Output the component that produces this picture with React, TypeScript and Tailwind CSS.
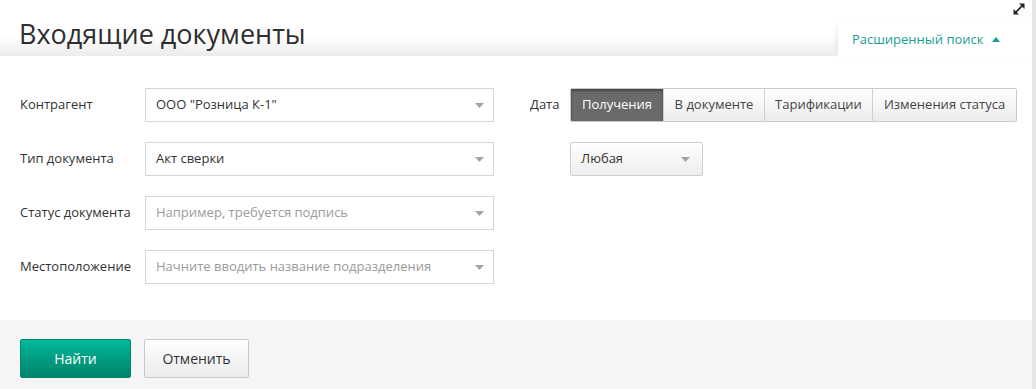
import React from "react";

const font = { fontFamily: '"Open Sans", "Noto Sans", sans-serif' };

function Caret({ className = "" }: { className?: string }) {
  return (
    <svg width="9" height="5" viewBox="0 0 9 5" className={className}>
      <path d="M0 0 H9 L4.5 5 Z" fill="#a3a3a3" />
    </svg>
  );
}

function Field({ label, value, placeholder }: { label: string; value?: string; placeholder?: string }) {
  return (
    <div className="flex items-center h-[34px]">
      <div className="w-[125px] shrink-0 text-[13px] text-[#333]">{label}</div>
      <div className="w-[349px] h-[34px] border border-[#d6d6d6] bg-white flex items-center pl-[10px] pr-[9px]">
        <span className={`flex-1 text-[13px] ${value ? "text-[#333]" : "text-[#9a9a9a]"}`}>{value ?? placeholder}</span>
        <Caret />
      </div>
    </div>
  );
}

const tabs = [
  { t: "Получения", w: "w-[92px]" },
  { t: "В документе", w: "w-[101px]" },
  { t: "Тарификации", w: "w-[108px]" },
  { t: "Изменения статуса", w: "w-[144px]" },
];

export default function App() {
  return (
    <div className="w-[1036px] h-[389px] flex bg-white overflow-hidden" style={font}>
      <div className="w-[1032px] flex flex-col">
        {/* header */}
        <div className="relative h-[56px] flex items-end justify-between bg-gradient-to-b from-white from-65% to-[#ebebeb]">
          <h1 className="pl-[19px] pb-[9px] text-[27px] leading-none text-[#2e2e2e] font-medium">Входящие документы</h1>
          <div className="w-[194px] h-[33px] bg-white flex items-center pl-[14px] gap-[8px] shadow-[-4px_0_6px_-4px_rgba(0,0,0,0.12)]">
            <span className="text-[13px] text-[#1a9e94]">Расширенный поиск</span>
            <svg width="8" height="5" viewBox="0 0 8 5">
              <path d="M0 5 L4 0 L8 5 Z" fill="#1a9e94" />
            </svg>
          </div>
          <svg className="absolute right-[7px] top-[3px]" width="12" height="12" viewBox="0 0 12 12">
            <path d="M2 10 L10 2" stroke="#222" strokeWidth="1.7" />
            <path d="M6 0.5 H11.5 V6 Z" fill="#222" />
            <path d="M0.5 6 V11.5 H6 Z" fill="#222" />
          </svg>
        </div>

        {/* form */}
        <div className="flex-1 flex pt-[32px] pl-[20px]">
          <div className="flex flex-col gap-[20px]">
            <Field label="Контрагент" value={'ООО "Розница К-1"'} />
            <Field label="Тип документа" value="Акт сверки" />
            <Field label="Статус документа" placeholder="Например, требуется подпись" />
            <Field label="Местоположение" placeholder="Начните вводить название подразделения" />
          </div>
          <div className="ml-[36px] flex flex-col gap-[20px]">
            <div className="flex items-center h-[34px]">
              <span className="w-[40px] text-[13px] text-[#333]">Дата</span>
              <div className="flex h-[34px] rounded-[2px] border border-[#c9c9c9] overflow-hidden">
                {tabs.map(({ t, w }, i) =>
                  i === 0 ? (
                    <div
                      key={t}
                      className={`${w} flex items-center justify-center text-[13px] text-white bg-[#6a6a6a] shadow-[inset_0_2px_3px_rgba(0,0,0,0.35)]`}
                    >
                      {t}
                    </div>
                  ) : (
                    <div
                      key={t}
                      className={`${w} flex items-center justify-center text-[13px] text-[#444] border-l border-[#cfcfcf] bg-gradient-to-b from-white to-[#ececec]`}
                    >
                      {t}
                    </div>
                  )
                )}
              </div>
            </div>
            <div className="pl-[40px]">
              <div className="w-[133px] h-[34px] border border-[#cfcfcf] rounded-[2px] bg-gradient-to-b from-white to-[#ededed] flex items-center pl-[10px] pr-[12px]">
                <span className="flex-1 text-[13px] text-[#333]">Любая</span>
                <Caret />
              </div>
            </div>
          </div>
        </div>

        {/* footer */}
        <div className="h-[69px] bg-[#f5f5f5] flex items-start pt-[19px] pl-[20px] gap-[13px]">
          <button className="w-[111px] h-[39px] rounded-[2px] border border-[#00866d] bg-gradient-to-b from-[#00b898] to-[#00846b] text-white text-[14px]">
            Найти
          </button>
          <button className="w-[105px] h-[39px] rounded-[2px] border border-[#c9c9c9] bg-gradient-to-b from-white to-[#ebebeb] text-[#333] text-[14px]">
            Отменить
          </button>
        </div>
      </div>
      <div className="w-[4px] bg-[#e6e6e6]" />
    </div>
  );
}
